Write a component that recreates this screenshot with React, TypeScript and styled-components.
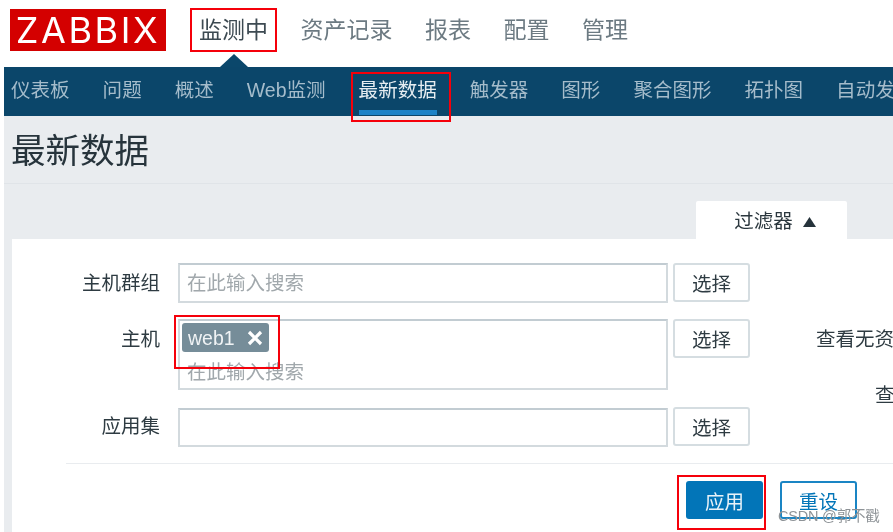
import React from "react";
import styled, { createGlobalStyle, css } from "styled-components";

const Global = createGlobalStyle`
  html, body { margin: 0; padding: 0; background: #fff; }
  body { font-family: "Liberation Sans", "Noto Sans CJK SC", sans-serif; color: #1f2c33; }
  * { box-sizing: border-box; }
`;

const Page = styled.div`
  position: relative;
  width: 893px;
  height: 532px;
  overflow: hidden;
  background: #fff;
  padding-left: 4px;
  filter: blur(0.3px);
`;

const Annotated = styled.div<{ $top: number; $left: number; $right: number; $bottom: number }>`
  position: relative;
  &::after {
    content: "";
    position: absolute;
    top: ${(p) => p.$top}px;
    left: ${(p) => p.$left}px;
    right: ${(p) => p.$right}px;
    bottom: ${(p) => p.$bottom}px;
    border: 2px solid #f5000a;
    pointer-events: none;
    z-index: 5;
  }
`;

const TopBar = styled.header`
  height: 67px;
  display: flex;
  align-items: flex-start;
  padding: 9px 0 0 6px;
`;

const Logo = styled.div`
  width: 156px;
  height: 42px;
  background: #d40000;
  color: #fff;
  font-family: "Inter", sans-serif;
  font-weight: 400;
  font-size: 36px;
  line-height: 42px;
  letter-spacing: 2.6px;
  text-align: center;
  flex: none;
  white-space: nowrap;
`;

const MainMenu = styled.nav`
  display: flex;
  margin-left: 33px;
  gap: 32.5px;
  height: 42px;
  align-items: center;
`;

const MainItem = styled.span<{ $active?: boolean }>`
  position: relative;
  font-size: 23px;
  line-height: 42px;
  color: ${(p) => (p.$active ? "#3d4a52" : "#6c7a82")};
  white-space: nowrap;
  ${(p) =>
    p.$active &&
    css`
      &::before {
        content: "";
        position: absolute;
        left: 50%;
        top: 45px;
        margin-left: -14px;
        border-left: 14px solid transparent;
        border-right: 14px solid transparent;
        border-bottom: 13px solid #0b476b;
      }
      &::after {
        content: "";
        position: absolute;
        top: -1px;
        left: -9px;
        right: -9px;
        bottom: -1px;
        border: 2px solid #f5000a;
      }
    `}
`;

const SubBar = styled.nav`
  height: 49px;
  background: #0b466a;
  display: flex;
  padding-left: 7px;
  gap: 33px;
  white-space: nowrap;
`;

const SubItem = styled.span<{ $active?: boolean }>`
  position: relative;
  font-size: 19.55px;
  line-height: 47px;
  height: 49px;
  color: ${(p) => (p.$active ? "#e6edf1" : "#a5bccb")};
  flex: none;
  ${(p) =>
    p.$active &&
    css`
      &::before {
        content: "";
        position: absolute;
        left: 0;
        right: 0;
        top: 43px;
        height: 5px;
        background: #1c83c7;
      }
      &::after {
        content: "";
        position: absolute;
        top: 5px;
        left: -8px;
        right: -14px;
        bottom: -6px;
        border: 2px solid #f5000a;
        z-index: 5;
      }
    `}
`;

const Content = styled.main`
  background: #e9ecef;
  height: 416px;
  padding-left: 8px;
`;

const TitleRow = styled.div`
  height: 68px;
  margin-left: -8px;
  padding-left: 7px;
  border-bottom: 1px solid #e0e4e8;
`;

const Title = styled.h1`
  margin: 0;
  font-weight: 400;
  font-size: 34.5px;
  line-height: 70px;
  color: #27343c;
`;

const TabRow = styled.div`
  display: flex;
  justify-content: flex-end;
  padding: 17px 46px 0 0;
  height: 55px;
`;

const Tab = styled.div`
  width: 151px;
  height: 38px;
  padding: 3px 0 0 7px;
  background: #fff;
  border-radius: 2px 2px 0 0;
  font-size: 19.5px;
  line-height: 35px;
  color: #2b373e;
  display: flex;
  justify-content: center;
  align-items: center;
  gap: 10px;
`;

const Triangle = styled.svg`
  width: 13px;
  height: 10px;
  fill: #26333b;
`;

const Panel = styled.section`
  background: #fff;
  height: 293px;
  padding-top: 24px;
`;

const Row = styled.div<{ $h: number }>`
  display: flex;
  align-items: flex-start;
  height: ${(p) => p.$h}px;
  white-space: nowrap;
`;

const Label = styled.div<{ $offset?: number }>`
  width: 148px;
  margin-top: ${(p) => p.$offset ?? 0}px;
  text-align: right;
  font-size: 19.5px;
  line-height: 40px;
  color: #2e3b42;
  flex: none;
`;

const Field = styled.div<{ $h: number }>`
  margin-left: 18px;
  width: 490px;
  height: ${(p) => p.$h}px;
  border: 2px solid #d3dade;
  border-top-color: #c2ccd2;
  padding: 0 7px;
  flex: none;
`;

const Placeholder = styled.div`
  font-size: 19.5px;
  line-height: 36px;
  color: #a1a8ac;
`;

const Chip = styled.div`
  display: inline-flex;
  align-items: center;
  justify-content: space-between;
  width: 87px;
  height: 29px;
  margin: 2px 0 0 -1px;
  padding: 2px 6px 0;
  border-radius: 3px;
  background: #768d99;
  color: #f0f3f5;
  font-size: 19.5px;
  svg { flex: none; margin-top: -2px; }
`;

const ChipRow = styled.div`
  height: 33px;
  margin-left: -4px;
`;

const Choose = styled.button<{ $offset?: number }>`
  margin: ${(p) => p.$offset ?? 0}px 0 0 5px;
  width: 77px;
  height: 39px;
  background: #fff;
  border: 2px solid #d5dde1;
  border-radius: 3px;
  font: inherit;
  font-size: 19.5px;
  color: #2e3b42;
  padding: 0;
  flex: none;
`;

const SideColumn = styled.div`
  margin-left: 66px;
  display: flex;
  flex-direction: column;
  gap: 16px;
  flex: none;
`;

const SideLabel = styled.div<{ $indent?: number }>`
  margin-left: ${(p) => p.$indent ?? 0}px;
  font-size: 19.5px;
  line-height: 40px;
  color: #2e3b42;
`;

const Divider = styled.hr`
  margin: 0 0 0 54px;
  border: 0;
  border-top: 1px solid #e9ecef;
`;

const Actions = styled.div`
  display: flex;
  padding: 17px 0 0 674px;
  gap: 17px;
`;

const Primary = styled.button`
  width: 77px;
  height: 38px;
  border: 0;
  border-radius: 3px;
  background: #0275b8;
  color: #e8f2f8;
  font: inherit;
  font-size: 19.5px;
  padding: 0;
  flex: none;
`;

const Secondary = styled(Primary)`
  background: #fff;
  border: 2px solid #1a85c4;
  color: #0275b8;
`;

const Watermark = styled.div`
  position: absolute;
  left: 778px;
  top: 506px;
  font-size: 14.5px;
  letter-spacing: -0.2px;
  line-height: 20px;
  color: #8e9397;
  white-space: nowrap;
  z-index: 6;
`;

const subItems = ["仪表板", "问题", "概述", "Web监测", "最新数据", "触发器", "图形", "聚合图形", "拓扑图", "自动发现"];
const mainItems = ["监测中", "资产记录", "报表", "配置", "管理"];

export default function App() {
  return (
    <Page>
      <Global />
      <TopBar>
        <Logo>ZABBIX</Logo>
        <MainMenu>
          {mainItems.map((m, i) => (
            <MainItem key={m} $active={i === 0}>
              {m}
            </MainItem>
          ))}
        </MainMenu>
      </TopBar>
      <SubBar>
        {subItems.map((s) => (
          <SubItem key={s} $active={s === "最新数据"}>
            {s}
          </SubItem>
        ))}
      </SubBar>
      <Content>
        <TitleRow>
          <Title>最新数据</Title>
        </TitleRow>
        <TabRow>
          <Tab>
            过滤器
            <Triangle viewBox="0 0 13 10">
              <path d="M6.5 0 13 10H0z" />
            </Triangle>
          </Tab>
        </TabRow>
        <Panel>
          <Row $h={56}>
            <Label>主机群组</Label>
            <Field $h={40}>
              <Placeholder>在此输入搜索</Placeholder>
            </Field>
            <Choose>选择</Choose>
          </Row>
          <Row $h={89}>
            <Label>主机</Label>
            <Annotated $top={-4} $left={14} $right={388} $bottom={21}>
              <Field $h={71}>
                <ChipRow>
                  <Chip>
                    web1
                    <svg width="16" height="16" viewBox="0 0 16 16" fill="none" stroke="#fff" strokeWidth="3.2">
                      <path d="M2 2l12 12M14 2 2 14" />
                    </svg>
                  </Chip>
                </ChipRow>
                <Placeholder>在此输入搜索</Placeholder>
              </Field>
            </Annotated>
            <Choose>选择</Choose>
            <SideColumn>
              <SideLabel>查看无资产信息的主机</SideLabel>
              <SideLabel $indent={59}>查看细节</SideLabel>
            </SideColumn>
          </Row>
          <Row $h={55}>
            <Label $offset={-2}>应用集</Label>
            <Field $h={39} />
            <Choose $offset={-1}>选择</Choose>
          </Row>
          <Divider />
          <Actions>
            <Annotated $top={-6} $left={-9} $right={-3} $bottom={-11}>
              <Primary>应用</Primary>
            </Annotated>
            <Secondary>重设</Secondary>
          </Actions>
        </Panel>
      </Content>
      <Watermark>CSDN @郭不戳</Watermark>
    </Page>
  );
}
